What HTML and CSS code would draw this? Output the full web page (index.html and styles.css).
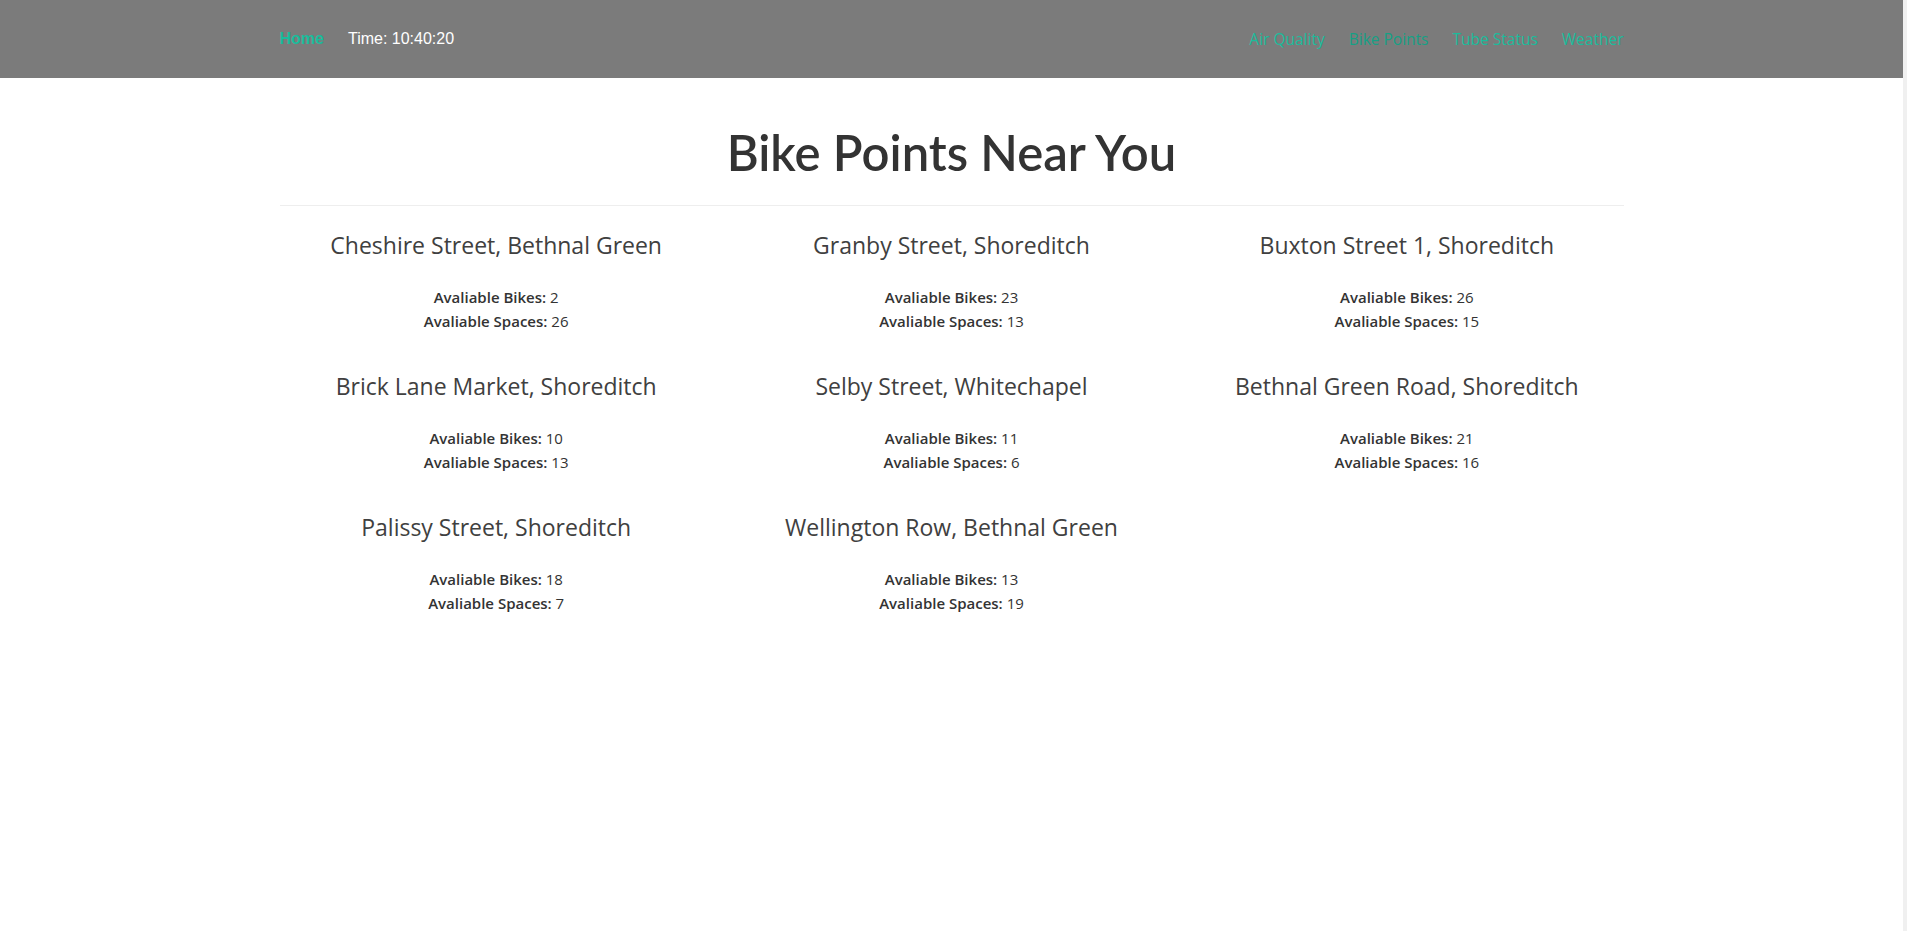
FILE: index.html
```html
<!DOCTYPE html>
<html lang="en">
<head>
<meta charset="utf-8">
<title>Bike Points Near You</title>
<link rel="stylesheet" href="styles.css">
</head>
<body>
<header class="navbar">
  <div class="container nav-inner">
    <div class="nav-left">
      <a class="brand" href="#">Home</a>
      <span class="clock">Time: 10:40:20</span>
    </div>
    <nav class="nav-right">
      <a href="#">Air Quality</a>
      <a href="#" class="active">Bike Points</a>
      <a href="#">Tube Status</a>
      <a href="#">Weather</a>
    </nav>
  </div>
</header>
<main class="container">
  <h1 class="title">Bike Points Near You</h1>
  <hr class="divider">
  <div class="grid">
    <section class="point">
      <h3>Cheshire Street, Bethnal Green</h3>
      <p><b>Avaliable Bikes:</b> 2<br><b>Avaliable Spaces:</b> 26</p>
    </section>
    <section class="point">
      <h3>Granby Street, Shoreditch</h3>
      <p><b>Avaliable Bikes:</b> 23<br><b>Avaliable Spaces:</b> 13</p>
    </section>
    <section class="point">
      <h3>Buxton Street 1, Shoreditch</h3>
      <p><b>Avaliable Bikes:</b> 26<br><b>Avaliable Spaces:</b> 15</p>
    </section>
    <section class="point">
      <h3>Brick Lane Market, Shoreditch</h3>
      <p><b>Avaliable Bikes:</b> 10<br><b>Avaliable Spaces:</b> 13</p>
    </section>
    <section class="point">
      <h3>Selby Street, Whitechapel</h3>
      <p><b>Avaliable Bikes:</b> 11<br><b>Avaliable Spaces:</b> 6</p>
    </section>
    <section class="point">
      <h3>Bethnal Green Road, Shoreditch</h3>
      <p><b>Avaliable Bikes:</b> 21<br><b>Avaliable Spaces:</b> 16</p>
    </section>
    <section class="point">
      <h3>Palissy Street, Shoreditch</h3>
      <p><b>Avaliable Bikes:</b> 18<br><b>Avaliable Spaces:</b> 7</p>
    </section>
    <section class="point">
      <h3>Wellington Row, Bethnal Green</h3>
      <p><b>Avaliable Bikes:</b> 13<br><b>Avaliable Spaces:</b> 19</p>
    </section>
  </div>
</main>
</body>
</html>
```
FILE: styles.css
```css
html {
  background: #f0f0f0;
}
body {
  margin: 0 4px 0 0;
  min-height: 100vh;
  background: #ffffff;
  font-family: "Open Sans", "DejaVu Sans", sans-serif;
  color: #333333;
}
.container {
  width: 1344px;
  margin: 0 auto;
}
.navbar {
  background: #7b7b7b;
  height: 78px;
}
.nav-inner {
  display: flex;
  justify-content: space-between;
  align-items: center;
  height: 77px;
}
.nav-left {
  display: flex;
  align-items: center;
  gap: 24px;
}
.brand {
  font-family: "Liberation Sans", Arial, sans-serif;
  font-weight: 700;
  font-size: 16px;
  color: #1abc9c;
  text-decoration: none;
}
.clock {
  font-family: "Liberation Sans", Arial, sans-serif;
  font-size: 16px;
  color: #ffffff;
}
.nav-right {
  display: flex;
  gap: 24px;
}
.nav-right a {
  font-size: 15.5px;
  color: #1abc9c;
  text-decoration: none;
}
.nav-right a.active {
  color: #16a085;
}
.title {
  margin: 0;
  padding-top: 48px;
  text-align: center;
  font-family: "Lato", "Open Sans", sans-serif;
  font-size: 49px;
  font-weight: 600;
  line-height: 1.1;
  color: #333333;
}
.divider {
  margin: 25px 0 0;
  border: 0;
  border-top: 1px solid #eeeeee;
}
.grid {
  display: grid;
  grid-template-columns: repeat(3, 1fr);
  margin: 0 -11px;
}
.point {
  text-align: center;
  height: 141px;
}
.point h3 {
  margin: 27px 0 0;
  font-size: 23px;
  font-weight: 400;
  line-height: 1.1;
  color: #404040;
}
.point p {
  margin: 27px 0 0;
  font-size: 15px;
  line-height: 24px;
  color: #333333;
}
.point b {
  font-weight: 600;
}
```
